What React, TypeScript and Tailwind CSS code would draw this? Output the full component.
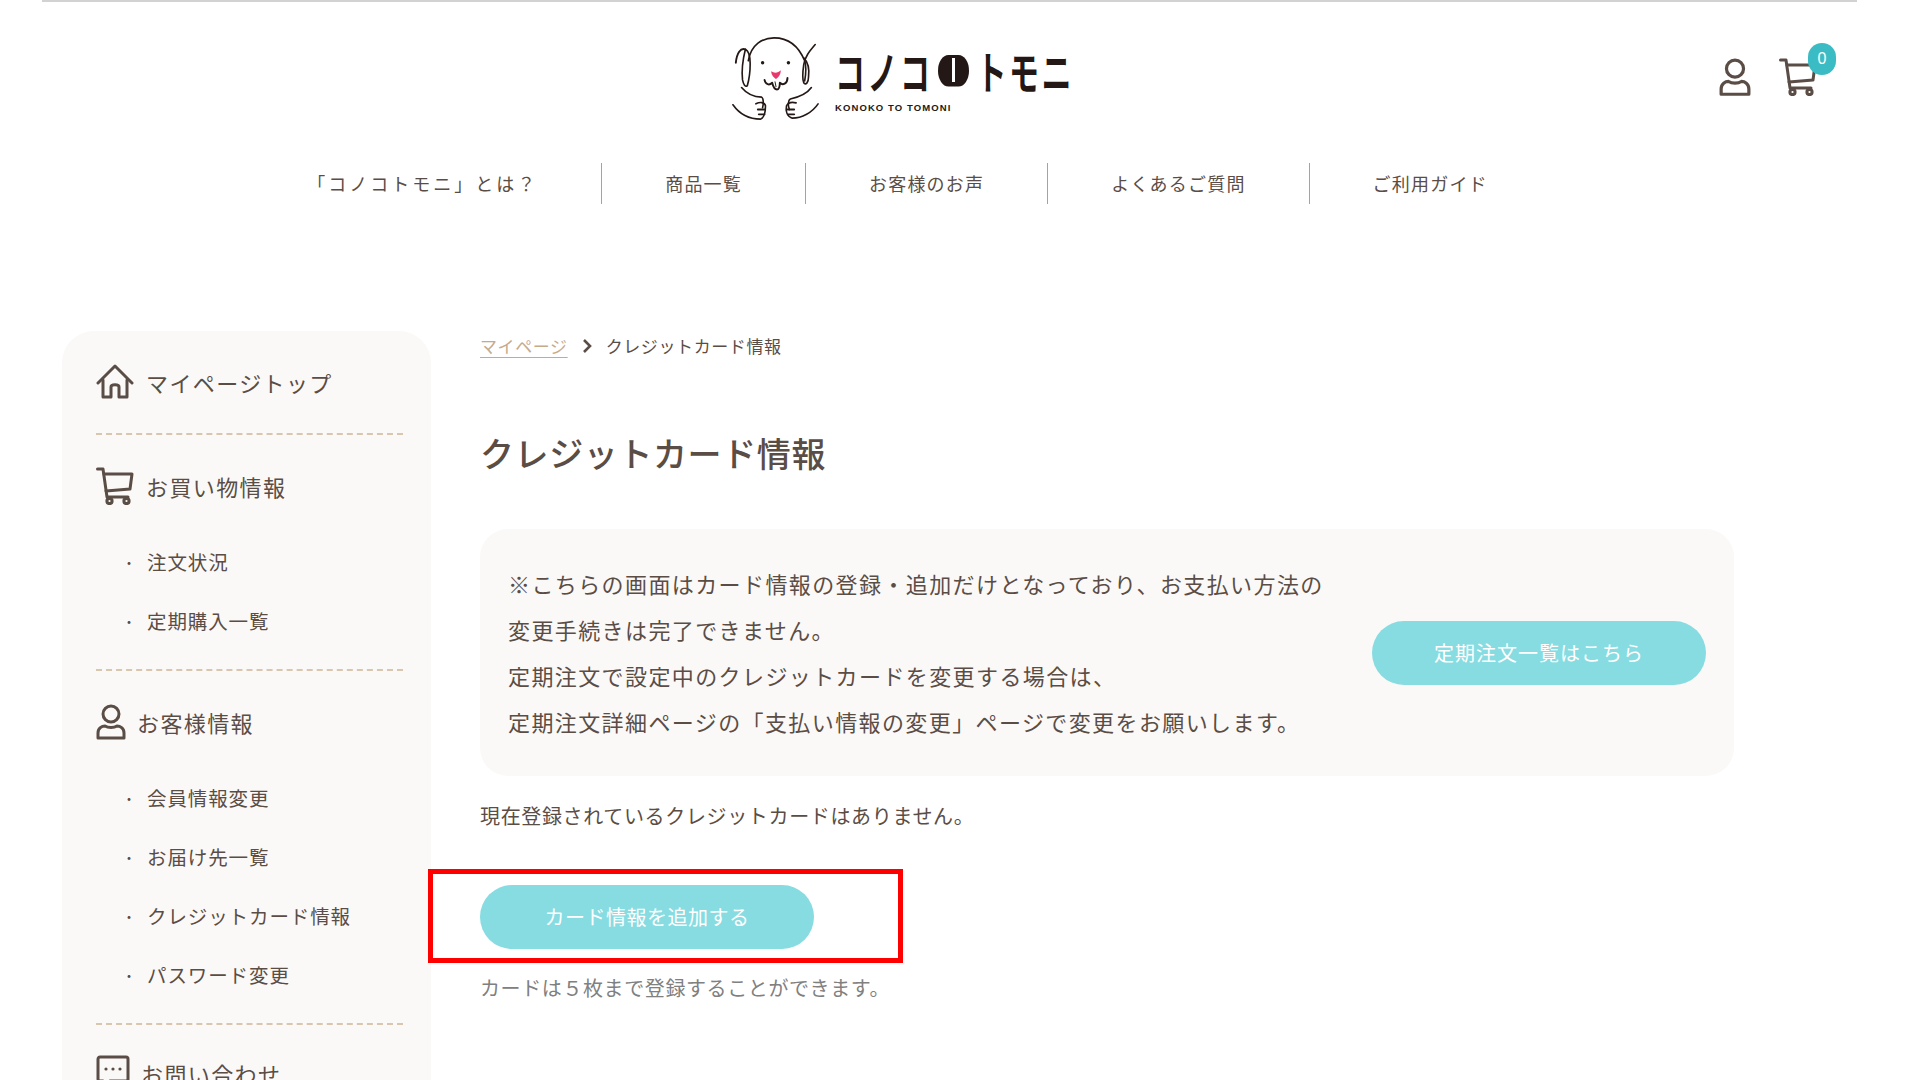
import React from 'react';

const jp = "font-['Noto_Sans_CJK_JP','Noto_Sans',sans-serif]";

const navItems = ['「コノコトモニ」とは？', '商品一覧', 'お客様のお声', 'よくあるご質問', 'ご利用ガイド'];

// Logo dog, drawn by hand
const DogLogo = () => (
  <svg width="88" height="90" viewBox="0 0 92 90" fill="none" stroke="#231815" strokeWidth="1.7" strokeLinecap="round" strokeLinejoin="round">
    <path d="M17 27C20 10 32 3 44 3C57 3 69 10 76 27C78 33 77 42 76 48" />
    <path d="M87 10C81 17 76 23 75 31C74 38 73 45 75 50C77 53 80 50 80 44C81 36 79 28 75 24" />
    <path d="M14 15C9 13 5 19 4 29" strokeWidth="2" />
    <path d="M14 15C18 17 19 24 19 30C19 38 18 46 16 53C14 55 12 52 11 47C10 38 11 27 14 15" />
    <circle cx="32" cy="29" r="1.8" fill="#231815" stroke="none" />
    <circle cx="59" cy="29" r="1.8" fill="#231815" stroke="none" />
    <path d="M41 38C44 40 48 40 51 37C51 42 48 45 46 46C44 45 41 42 41 38Z" fill="#e8396f" stroke="none" />
    <path d="M34 47C35 52 39 53 42 50C43 54 45 57 47 57C49 57 50 54 50 50C53 53 58 51 58 45" strokeWidth="2" />
    <path d="M45 49L46 54" strokeWidth="1" />
    <path d="M10 55C15 61 22 65 31 65C33 66 33 72 32 76" />
    <path d="M83 55C78 62 70 65 61 67C59 68 58 73 60 78" />
    <path d="M1 73C8 83 19 88 30 88C34 86 35 81 35 74C34 70 29 70 25 72" />
    <path d="M27 78H34M28 83H34" strokeWidth="2" />
    <path d="M90 72C84 81 73 87 63 87C57 85 56 79 57 74C59 70 63 70 67 71" />
    <path d="M58 78H65M59 83H65" strokeWidth="2" />
  </svg>
);

const UserIcon = ({ size = 34, stroke = 3 }: { size?: number; stroke?: number }) => (
  <svg width={size} height={size * 1.2} viewBox="0 0 30 36" fill="none" stroke="#5a4d46" strokeWidth={stroke} strokeLinejoin="round">
    <circle cx="15" cy="10" r="8" />
    <path d="M2 34V29C2 24 6 22 9 22C12 24 18 24 21 22C24 22 28 24 28 29V34Z" />
  </svg>
);

const CartIcon = ({ size = 38 }: { size?: number }) => (
  <svg width={size} height={size} viewBox="0 0 38 38" fill="none" stroke="#5a4d46" strokeWidth="3" strokeLinecap="round" strokeLinejoin="round">
    <path d="M1.5 2H7L11 30H32" />
    <path d="M8 7H36L34 22L10 24" />
    <circle cx="13.5" cy="34" r="2.6" />
    <circle cx="30.5" cy="34" r="2.6" />
  </svg>
);

const HomeIcon = () => (
  <svg width="38" height="36" viewBox="0 0 38 36" fill="none" stroke="#5a4d46" strokeWidth="3" strokeLinejoin="round" strokeLinecap="round">
    <path d="M2 19L19 2L36 19" />
    <path d="M7 16V33H15V23C15 20 23 20 23 23V33H31V16" />
  </svg>
);

const ChatIcon = () => (
  <svg width="34" height="36" viewBox="0 0 34 36" fill="none" stroke="#5a4d46" strokeWidth="3" strokeLinejoin="round">
    <path d="M4 2H30C31.500 2 32 3 32 4V24C32 26 31 26 30 26H14L7 32V26H4C3 26 2 25 2 24V4C2 3 3 2 4 2Z" />
    <circle cx="10" cy="14" r="1.6" fill="#5a4d46" stroke="none" />
    <circle cx="17" cy="14" r="1.6" fill="#5a4d46" stroke="none" />
    <circle cx="24" cy="14" r="1.6" fill="#5a4d46" stroke="none" />
  </svg>
);

const Divider = () => <div className="mr-[28px] border-t-2 border-dashed border-[#d8c6ae]" />;

const SideHead = ({ icon, label, gap = 'gap-[12px]', className = '' }: { icon: React.ReactNode; label: string; gap?: string; className?: string }) => (
  <div className={`flex items-center ${gap} text-[22px] leading-[40px] tracking-[1.400px] ${className}`}>
    {icon}
    <span>{label}</span>
  </div>
);

const SubList = ({ items }: { items: string[] }) => (
  <ul className="mt-[36px] mb-[28px] flex flex-col gap-[19px]">
    {items.map((item) => (
      <li key={item} className="flex h-[40px] items-center text-[19.500px] tracking-[0.9px]">
        <span className="w-[51px] pl-[26px] text-[14px] leading-none">・</span>
        <span>{item}</span>
      </li>
    ))}
  </ul>
);

export default function App() {
  return (
    <div className={`relative h-[1080px] overflow-hidden bg-white text-[#5a4d46] ${jp}`}>
      <div className="mr-[63px] ml-[42px] h-[2px] bg-[#d2d2d2]" />

      {/* header */}
      <header className="relative">
        <div className="flex h-[121px] items-start justify-center pt-[31px] pr-[114px]">
          <DogLogo />
          <div className="ml-[15px] flex flex-col pt-[13px] text-[#231815]">
            <div className="flex h-[48px] origin-center scale-y-[1.5] items-center text-[30px] leading-[48px] font-bold tracking-[2.500px]">
              <span>コノコ</span>
              <span className="mr-[8px] ml-[5px] flex h-[21px] w-[31px] items-center justify-center rounded-full bg-[#231815]">
                <span className="h-[16px] w-[3px] bg-white" />
              </span>
              <span>トモニ</span>
            </div>
            <div className="mt-[8px] text-[9.500px] leading-[12px] font-bold tracking-[1.1px] font-['Liberation_Sans',sans-serif]">KONOKO TO TOMONI</div>
          </div>
        </div>

        <div className="absolute top-[56px] right-[103px] flex items-end gap-[28px]">
          <UserIcon size={32} />
          <CartIcon size={38} />
          <span className="absolute -top-[15px] -right-[19px] flex h-[32px] w-[28px] items-center justify-center rounded-full bg-[#3bbcc4] text-[16px] text-white font-['Liberation_Sans',sans-serif]">0</span>
        </div>

        <nav className="mt-[40px] flex justify-center pr-[125px]">
          {navItems.map((item, i) => (
            <div key={item} className={`flex h-[41px] items-center px-[63px] text-[18px] ${i > 0 ? 'border-l border-[#a9a19c] tracking-[1.2px]' : 'tracking-[3px]'}`}>
              {item}
            </div>
          ))}
        </nav>
      </header>

      {/* main */}
      <div className="mt-[127px] flex pl-[62px]">
        <aside className="h-[800px] w-[369px] shrink-0 rounded-t-[32px] bg-[#fbf9f7] pt-[31px] pl-[34px]">
          <SideHead icon={<HomeIcon />} label="マイページトップ" className="pb-[31px]" />
          <Divider />
          <SideHead icon={<CartIcon />} label="お買い物情報" className="mt-[31px]" />
          <SubList items={['注文状況', '定期購入一覧']} />
          <Divider />
          <SideHead icon={<UserIcon size={30} />} label="お客様情報" gap="gap-[11px]" className="mt-[31px]" />
          <SubList items={['会員情報変更', 'お届け先一覧', 'クレジットカード情報', 'パスワード変更']} />
          <Divider />
          <SideHead icon={<ChatIcon />} label="お問い合わせ" gap="gap-[11px]" className="mt-[28px]" />
        </aside>

        <main className="ml-[49px] w-[1254px] pt-[3px]">
          <div className="flex h-[24px] items-center text-[17px] tracking-[0.6px]">
            <span className="text-[#c6ab8b] underline underline-offset-[4px]">マイページ</span>
            <svg className="mr-[14px] ml-[14px]" width="10" height="16" viewBox="0 0 10 16" fill="none" stroke="#5a4d46" strokeWidth="2.600">
              <path d="M2 2L8 8L2 14" />
            </svg>
            <span>クレジットカード情報</span>
          </div>

          <h1 className="mt-[70px] text-[34px] leading-[50px] font-medium tracking-[0.6px]">クレジットカード情報</h1>

          <div className="mt-[51px] flex h-[247px] items-center justify-between rounded-[28px] bg-[#fbf9f7] pr-[28px] pl-[28px]">
            <p className="mb-[2px] text-[22px] leading-[46px] tracking-[1.400px]">
              ※こちらの画面はカード情報の登録・追加だけとなっており、お支払い方法の
              <br />
              変更手続きは完了できません。
              <br />
              定期注文で設定中のクレジットカードを変更する場合は、
              <br />
              定期注文詳細ページの「支払い情報の変更」ページで変更をお願いします。
            </p>
            <button className="flex h-[64px] w-[334px] items-center justify-center rounded-full bg-[#86dce1] text-[20px] tracking-[1px] text-white">
              定期注文一覧はこちら
            </button>
          </div>

          <p className="mt-[25px] text-[20px] leading-[30px] tracking-[0.65px]">現在登録されているクレジットカードはありません。</p>

          <button className="mt-[54px] flex h-[64px] w-[334px] items-center justify-center rounded-full bg-[#86dce1] text-[20px] tracking-[0.5px] text-white">
            カード情報を追加する
          </button>

          <p className="mt-[24px] text-[20px] leading-[30px] tracking-[0.6px] text-[#808080]">カードは５枚まで登録することができます。</p>
        </main>
      </div>

      {/* annotation box from the screenshot */}
      <div className="absolute top-[869px] left-[428px] h-[94px] w-[475px] border-[5px] border-[#ff0000]" />
    </div>
  );
}
